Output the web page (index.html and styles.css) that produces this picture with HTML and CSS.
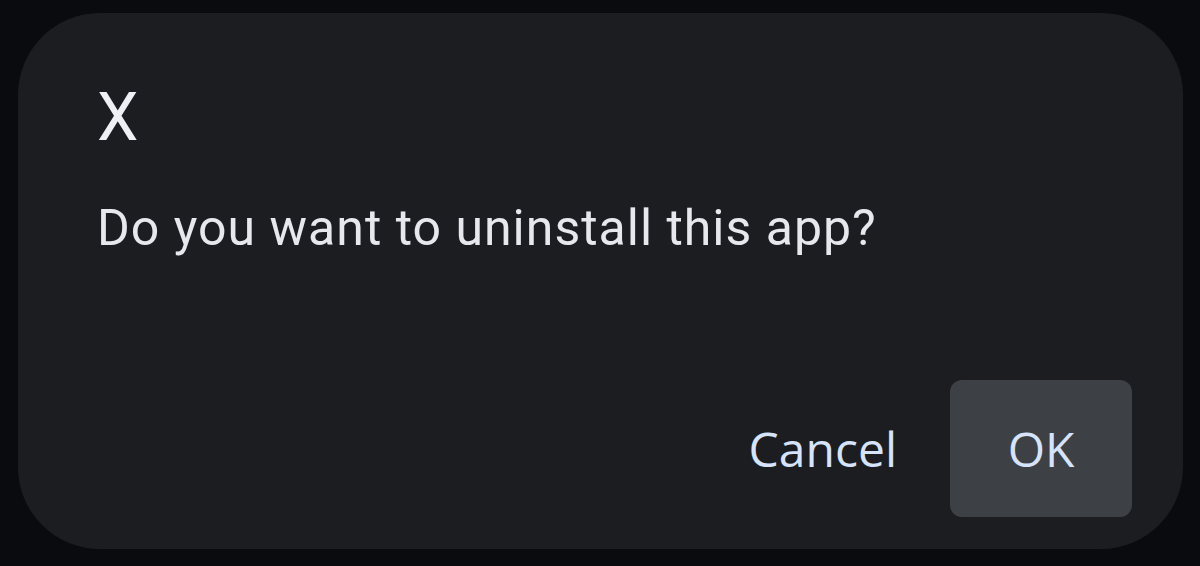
FILE: index.html
```html
<!DOCTYPE html>
<html lang="en">
<head>
  <meta charset="UTF-8">
  <meta name="viewport" content="width=device-width, initial-scale=1.0">
  <title>Uninstall</title>
  <link rel="stylesheet" href="styles.css">
</head>
<body>
  <div class="dialog">
    <h1 class="dialog-title">X</h1>
    <p class="dialog-text">Do you want to uninstall this app?</p>
    <div class="dialog-actions">
      <button class="btn btn-text">Cancel</button>
      <button class="btn btn-filled">OK</button>
    </div>
  </div>
</body>
</html>
```

FILE: styles.css
```css
body {
  margin: 0;
  background-color: #0a0b0e;
  font-family: Roboto, "Liberation Sans", sans-serif;
  height: 566px;
  overflow: hidden;
}
.dialog {
  box-sizing: border-box;
  margin: 13px 0 0 18px;
  width: 1165px;
  height: 536px;
  background-color: #1b1d21;
  border-radius: 82px;
  padding: 72px 51px 32px 79px;
  display: flex;
  flex-direction: column;
}
.dialog-title {
  margin: 0;
  font-size: 66px;
  font-weight: 400;
  line-height: 1;
  color: #eef0f5;
}
.dialog-text {
  margin: 52px 0 0;
  font-size: 50px;
  letter-spacing: 1px;
  line-height: 1;
  color: #e6e8ee;
}
.dialog-actions {
  margin-top: auto;
  display: flex;
  justify-content: flex-end;
  align-items: center;
  gap: 27px;
}
.btn {
  font-family: "Open Sans", Roboto, sans-serif;
  font-size: 48px;
  font-weight: 500;
  color: #d6e3fb;
  border: none;
  background: none;
  height: 137px;
  border-radius: 12px;
  padding: 0 26px;
}
.btn-filled {
  background-color: #3d4044;
  width: 182px;
  padding: 0;
}
```
